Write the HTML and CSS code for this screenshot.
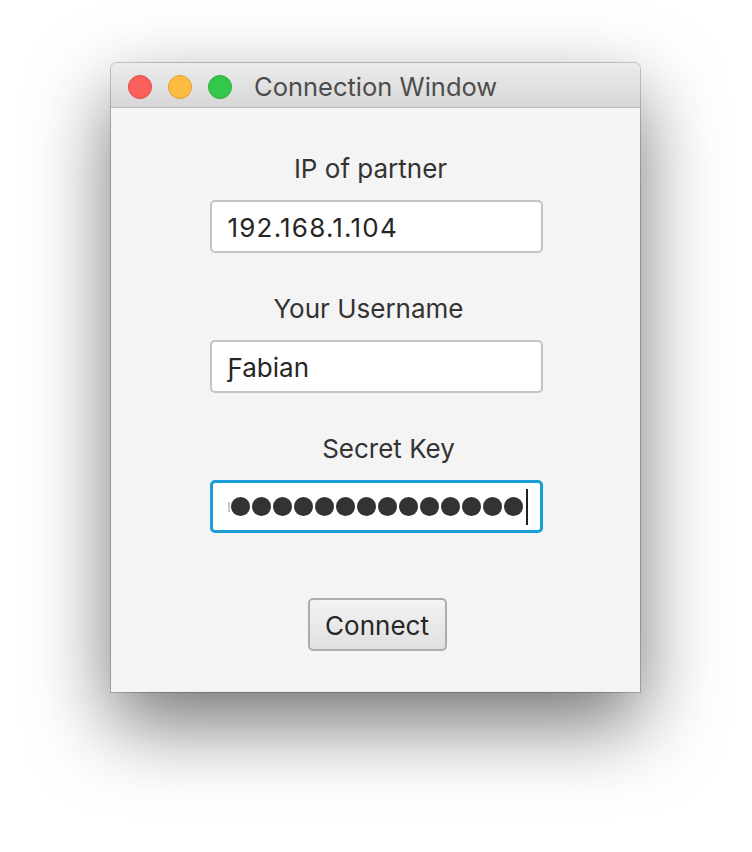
FILE: index.html
```html
<!DOCTYPE html>
<html>
<head>
<meta charset="utf-8">
<link rel="stylesheet" href="styles.css">
</head>
<body>
<div class="window">
  <div class="titlebar">
    <span class="light red"></span>
    <span class="light yellow"></span>
    <span class="light green"></span>
    <span class="title">Connection Window</span>
  </div>
  <div class="content">
    <div class="group">
      <div class="label label-ip">IP of partner</div>
      <div class="field"><span class="value digits">192.168.1.104</span></div>
    </div>
    <div class="group">
      <div class="label label-user">Your Username</div>
      <div class="field"><span class="value">Ƒabian</span></div>
    </div>
    <div class="group">
      <div class="label label-key">Secret Key</div>
      <div class="field focused">
        <span class="sliver"></span>
        <span class="dot"></span><span class="dot"></span><span class="dot"></span><span class="dot"></span>
        <span class="dot"></span><span class="dot"></span><span class="dot"></span><span class="dot"></span>
        <span class="dot"></span><span class="dot"></span><span class="dot"></span><span class="dot"></span>
        <span class="dot"></span><span class="dot"></span>
        <span class="caret"></span>
      </div>
    </div>
    <div class="button">Connect</div>
  </div>
</div>
</body>
</html>
```
FILE: styles.css
```css
html, body {
  margin: 0;
  padding: 0;
  background: #ffffff;
}
body {
  width: 752px;
  height: 852px;
  overflow: hidden;
  font-family: Inter, "Liberation Sans", sans-serif;
}
.window {
  margin-left: 111px;
  margin-top: 63px;
  width: 529px;
  height: 629px;
  border-radius: 6px 6px 0 0;
  box-shadow: 0 0 0 1px rgba(0,0,0,0.2), 0 32px 80px rgba(0,0,0,0.55);
  background: #f4f4f4;
  display: flex;
  flex-direction: column;
}
.titlebar {
  box-sizing: border-box;
  height: 45px;
  padding-top: 3px;
  border-bottom: 1px solid #b9b9b9;
  border-radius: 6px 6px 0 0;
  background: linear-gradient(#ececec, #d6d6d6);
  display: flex;
  align-items: center;
  padding-left: 17px;
  gap: 16px;
}
.light {
  width: 24px;
  height: 24px;
  border-radius: 50%;
  box-sizing: border-box;
}
.red { background: #fc605c; border: 1px solid #de4a46; }
.yellow { background: #fdbc40; border: 1px solid #dea034; }
.green { background: #34c84a; border: 1px solid #27aa35; }
.title {
  margin-left: 6px;
  font-size: 25.5px;
  color: #4d4d4d;
}
.content {
  display: flex;
  flex-direction: column;
  align-items: center;
  padding-top: 46px;
  gap: 41px;
}
.group {
  display: flex;
  flex-direction: column;
  align-items: center;
  gap: 16px;
}
.label {
  font-size: 26px;
  line-height: 30px;
  color: #333333;
}
.label-ip { margin-right: 10px; }
.label-user { margin-right: 14px; }
.label-key { margin-left: 26px; }
.field {
  box-sizing: border-box;
  width: 333px;
  height: 53px;
  margin-left: 1px;
  background: #ffffff;
  border: 2px solid #c4c4c4;
  border-radius: 5px;
  display: flex;
  align-items: center;
  padding-left: 16px;
  padding-top: 1px;
  font-size: 26px;
  color: #262626;
}
.digits {
  letter-spacing: 1.2px;
}
.field.focused {
  border: 3px solid #1b9ed8;
  padding-left: 15px;
  padding-top: 0;
}
.sliver {
  width: 2px;
  height: 10px;
  background: #c9c9c9;
  margin-right: 1px;
}
.dot {
  width: 19.5px;
  height: 19.5px;
  border-radius: 50%;
  background: #333333;
  margin-right: 1.5px;
}
.caret {
  width: 2px;
  height: 36px;
  margin-left: 1px;
  background: #222;
}
.button {
  margin-top: 24px;
  box-sizing: border-box;
  width: 139px;
  height: 53px;
  margin-left: 3px;
  padding-top: 1px;
  border: 2px solid #acacac;
  border-radius: 5px;
  background: linear-gradient(#f3f3f3, #e0e0e0);
  display: flex;
  align-items: center;
  justify-content: center;
  font-size: 26px;
  color: #262626;
}
```
